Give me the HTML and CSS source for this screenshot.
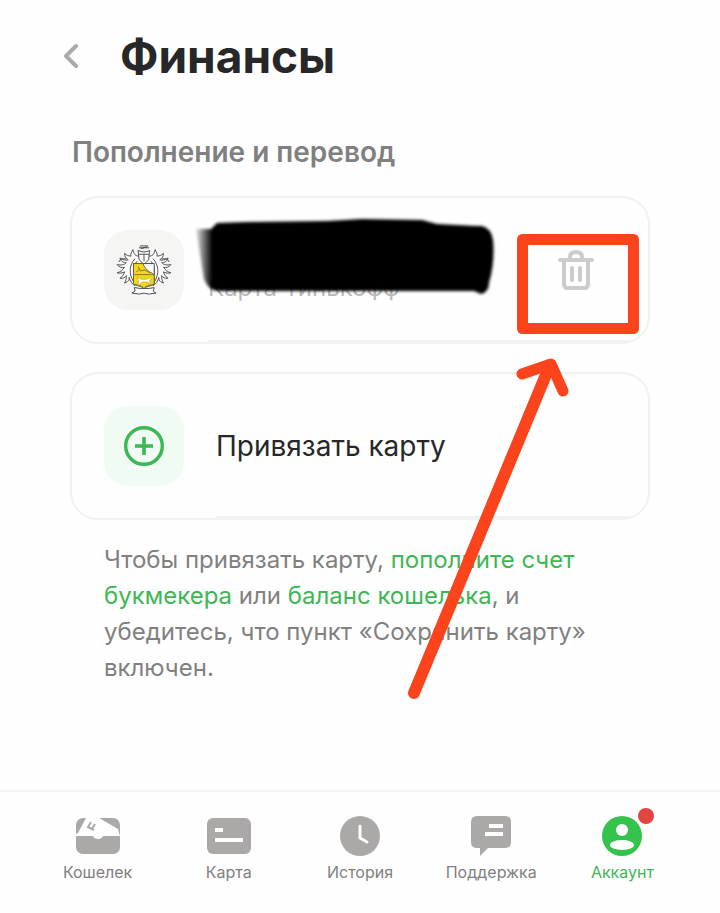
FILE: index.html
```html
<!DOCTYPE html>
<html lang="ru">
<head>
<meta charset="utf-8">
<meta name="viewport" content="width=device-width, initial-scale=1">
<title>Финансы</title>
<link rel="stylesheet" href="styles.css">
</head>
<body>
<div class="app">
  <header class="header">
    <button class="back" type="button" aria-label="Назад">
      <svg width="16" height="26" viewBox="0 0 16 26" fill="none" stroke="#aaa" stroke-width="4" stroke-linecap="round" stroke-linejoin="round"><path d="M12 3 2 13l10 10"/></svg>
    </button>
    <h1 class="title">Финансы</h1>
  </header>

  <main class="main">
    <h2 class="subtitle">Пополнение и перевод</h2>

    <section class="card card-saved">
      <span class="tile tile-bank">
        <svg width="56" height="50" viewBox="0 0 60 54" fill="none" stroke="#44444a" stroke-linejoin="round" stroke-linecap="round">
          <path fill="#fff" d="M24 12c-3 0-5-2-6-7-1 3-3 4-2 7-3 0-5-1-7-3 0 4 2 6 4 7-3 1-6 0-9-2 1 4 4 5 7 5-3 3-6 3-10 2 2 3 5 4 8 3-2 3-4 5-8 6 3 1 6 0 8-1-1 3-2 5-5 7 4 0 6-1 7-3 0 3 0 5-2 8 4-1 5-3 5-6 1 4 3 7 6 9l3-4c-5-7-6-15-1-22"/>
          <path fill="#fff" d="M36 12c3 0 5-2 6-7 1 3 3 4 2 7 3 0 5-1 7-3 0 4-2 6-4 7 3 1 6 0 9-2-1 4-4 5-7 5 3 3 6 3 10 2-2 3-5 4-8 3 2 3 4 5 8 6-3 1-6 0-8-1 1 3 2 5 5 7-4 0-6-1-7-3 0 3 0 5 2 8-4-1-5-3-5-6-1 4-3 7-6 9l-3-4c5-7 6-15 1-22"/>
          <path d="M20 15c-6 7-7 16-1 25M40 15c6 7 7 16 1 25M3 18c1-3 4-4 7-3M57 18c-1-3-4-4-7-3"/>
          <path fill="#fff" d="M24 6c4 2 8 2 12 0l-1 10-5 5-5-5z"/>
          <path d="M25 10h10M30 10v7M25 3h10M26 1h8M27 4l6-2"/>
          <path fill="#fff" d="M19 20h22v21c0 3-8 3-11 6-3-3-11-3-11-6z"/>
          <path fill="#f2d51c" stroke="#68602b" d="M19 20h10c1 4 4 7 7 9 2 1 5 2 5 5v8c-3 2-8 1-11 5-3-4-8-3-11-5z"/>
          <path stroke="#7d7127" d="M20 32h20M24 24l2 4 5-1 5 3M25 26l-3 3"/>
          <path fill="#fff" stroke="#a79b3a" stroke-width=".6" d="m23 35 4 2h6l4-2 1 2-2 1 1 5-3-3h-6l-4 4v-5z"/>
          <path fill="#fff" d="m20 46 6 1h9l6-1-1 4 3 2-8 1-5-1-5 1-8-1 3-2z"/>
        </svg>
      </span>
      <span class="saved-name">Карта Тинькофф</span>
      <button class="delete" type="button" aria-label="Удалить карту">
        <svg width="36" height="42" viewBox="0 0 36 42" fill="none" stroke="#ccc" stroke-width="4" stroke-linecap="round" stroke-linejoin="round"><path d="M2 11h32M12 10V8q0-5 6-5t6 5v2M6 12v23q0 4 4 4h16q4 0 4-4V12M14 19v12M22 19v12"/></svg>
      </button>
    </section>

    <button class="card card-add" type="button">
      <span class="tile tile-plus">
        <svg width="40" height="40" viewBox="0 0 40 40" fill="none" stroke="#3db753"><circle cx="20" cy="20" r="18.300" stroke-width="3.400"/><path stroke-width="3.600" d="M11 20h18M20 11v18"/></svg>
      </span>
      <span class="add-name">Привязать карту</span>
    </button>

    <p class="hint">Чтобы привязать карту, <a href="#topup">пополните счет букмекера</a> или <a href="#balance">баланс кошелька</a>, и убедитесь, что пункт «Сохранить карту» включен.</p>

    <svg class="markup" width="720" height="600" viewBox="0 112 720 600" aria-hidden="true">
      <defs>
        <filter id="soft" x="-5%" y="-20%" width="110%" height="140%"><feGaussianBlur stdDeviation="1.800"/></filter>
        <linearGradient id="edge"><stop offset="0" stop-color="#000" stop-opacity=".1"/><stop offset=".055" stop-color="#000"/></linearGradient>
      </defs>
      <path filter="url(#soft)" fill="url(#edge)" d="M196 229l15 0 6-6 30-1 80-1 35-2 60 1 15 4 40 2 5 0q9 2 11 14 2 22-4 43 0 9-8 11l-7-3H220q-11 1-16-12z"/>
      <g fill="none" stroke="#fb431c" stroke-linecap="round" stroke-linejoin="round">
        <rect x="522.500" y="239.500" width="111" height="89" stroke-width="11"/>
        <path stroke-width="12" d="M414 693 550 365"/>
        <path stroke-width="11" d="m522 374 29-10 12 27"/>
      </g>
    </svg>
  </main>

  <nav class="nav">
    <a class="tab" href="#wallet">
      <svg class="tab-icon" width="44" height="40" viewBox="0 0 44 40"><rect y="2" width="44" height="36" rx="7" fill="#aaa9a7"/><path fill="#fff" d="M10 2h13l19 11 2 7H27q-1 3-5 3t-5-3H0v-2l2-1z"/><path d="m15 6-3 5 6 3M19 8l-3 5" fill="none" stroke="#aaa9a7" stroke-width="2"/></svg>
      <span>Кошелек</span>
    </a>
    <a class="tab" href="#card">
      <svg class="tab-icon" width="44" height="40" viewBox="0 0 44 40"><rect y="2" width="44" height="36" rx="6" fill="#aaa9a7"/><path fill="#fff" d="M8 12h8v4H8zM8 22h28v4H8z"/></svg>
      <span>Карта</span>
    </a>
    <a class="tab" href="#history">
      <svg class="tab-icon" width="40" height="40" viewBox="0 0 40 40"><circle cx="20" cy="20" r="20" fill="#aaa9a7"/><path d="M20 10v12l7 4" fill="none" stroke="#fff" stroke-width="3" stroke-linecap="round" stroke-linejoin="round"/></svg>
      <span>История</span>
    </a>
    <a class="tab" href="#support">
      <svg class="tab-icon" width="40" height="40" viewBox="0 0 40 40"><path fill="#aaa9a7" d="M6 0h28q6 0 6 6v20q0 6-6 6H17l-8 8v-8H6q-6 0-6-6V6q0-6 6-6z"/><path fill="#fff" d="M18 8h14v4H18zM14 16h18v4H14z"/></svg>
      <span>Поддержка</span>
    </a>
    <a class="tab tab-active" href="#account" aria-current="page">
      <span class="account">
        <svg class="tab-icon" width="40" height="40" viewBox="0 0 40 40"><circle cx="20" cy="20" r="20" fill="#34c34d"/><circle cx="20" cy="14" r="6" fill="#fff"/><ellipse cx="20" cy="29" rx="12" ry="5" fill="#fff"/></svg>
        <i class="badge"></i>
      </span>
      <span>Аккаунт</span>
    </a>
  </nav>
</div>
</body>
</html>
```
FILE: styles.css
```css
* {
  box-sizing: border-box;
}

body {
  margin: 0;
  background: #fefefe;
  color: #272727;
  font-family: Inter, "Liberation Sans", sans-serif;
}

button {
  margin: 0;
  border: 0;
  padding: 0;
  background: none;
  color: inherit;
  font: inherit;
  text-align: left;
  cursor: pointer;
}

svg {
  display: block;
}

a {
  color: #3db753;
  text-decoration: none;
}

.app {
  display: flex;
  flex-direction: column;
  min-height: 100vh;
}

.header {
  display: flex;
  align-items: center;
  gap: 40px;
  height: 112px;
  padding: 0 64px;
}

.title {
  margin: 0;
  font-size: 46px;
  line-height: 56px;
  font-weight: 700;
}

.main {
  position: relative;
  flex: 1;
  padding: 20px 70px 0;
}

.subtitle {
  margin: 0 2px 24px;
  color: #808080;
  font-size: 28px;
  line-height: 40px;
  font-weight: 600;
}

.card {
  display: flex;
  align-items: center;
  width: 100%;
  padding: 32px;
  border: 2px solid #f1f1f1;
  border-radius: 28px;
  background-image: linear-gradient(#f1f1f1, #f1f1f1);
  background-repeat: no-repeat;
  background-size: 100% 2px;
}

.card-saved {
  gap: 24px;
  margin-bottom: 28px;
  background-position: 136px 100%;
}

.card-add {
  gap: 32px;
  margin-bottom: 22px;
  background-position: 144px 100%;
}

.tile {
  display: grid;
  flex: none;
  place-items: center;
  width: 80px;
  height: 80px;
  border-radius: 24px;
}

.tile-bank {
  background: #f5f5f3;
}

.tile-plus {
  background: #effbf3;
}

.saved-name {
  flex: 1;
  align-self: flex-end;
  padding-bottom: 8px;
  color: #bbb;
  font-size: 24px;
  line-height: 28px;
}

.delete {
  margin-right: 22px;
}

.add-name {
  font-size: 28px;
  line-height: 36px;
}

.hint {
  margin: 0 34px;
  color: #808080;
  font-size: 24px;
  line-height: 36px;
}

.markup {
  position: absolute;
  top: 0;
  left: 0;
  pointer-events: none;
}

.nav {
  display: flex;
  padding: 24px 32px 29px;
  border-top: 2px solid #f3f3f3;
}

.tab {
  display: flex;
  flex: 1;
  flex-direction: column;
  align-items: center;
  gap: 4px;
  color: #808080;
  font-size: 16px;
  line-height: 24px;
}

.tab-active {
  color: #3db753;
}

.account {
  position: relative;
}

.badge {
  position: absolute;
  top: -8px;
  right: -12px;
  width: 16px;
  height: 16px;
  border-radius: 50%;
  background: #e24540;
}
```
